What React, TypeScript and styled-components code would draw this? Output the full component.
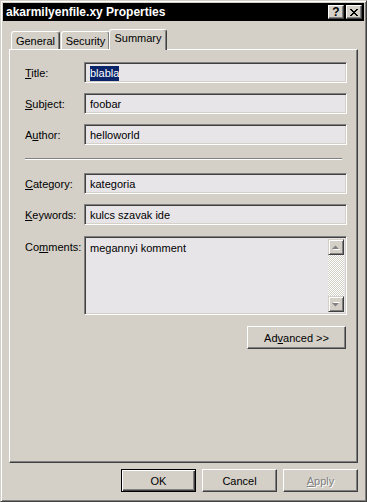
import styled, { createGlobalStyle } from "styled-components";

const GlobalStyle = createGlobalStyle`
  html, body {
    margin: 0;
    padding: 0;
    background: #d4d0c8;
  }
  body {
    font-family: "Liberation Sans", Arial, sans-serif;
    font-size: 11px;
    color: #000;
  }
`;

const Window = styled.div`
  width: 367px;
  height: 502px;
  box-sizing: border-box;
  background: #d4d0c8;
  border: 1px solid;
  border-color: #d4d0c8 #404040 #404040 #d4d0c8;
  box-shadow: inset 1px 1px #fff, inset -1px -1px #808080;
  padding: 2px;
  display: flex;
  flex-direction: column;
`;

const TitleBar = styled.div`
  height: 18px;
  background: #000;
  color: #fff;
  display: flex;
  align-items: center;
  padding: 0 2px;
  gap: 2px;
`;

const Caption = styled.div`
  flex: 1;
  font-weight: bold;
  font-size: 12px;
  padding-left: 1px;
`;

const CaptionButton = styled.div`
  width: 16px;
  height: 14px;
  box-sizing: border-box;
  background: #d4d0c8;
  color: #000;
  border: 1px solid;
  border-color: #fff #404040 #404040 #fff;
  box-shadow: inset -1px -1px #808080;
  display: flex;
  align-items: center;
  justify-content: center;
  font-weight: bold;
  font-size: 12px;
  line-height: 1;
`;

const Body = styled.div`
  padding: 8px 6px 0;
  display: flex;
  flex-direction: column;
`;

const TabStrip = styled.div`
  display: flex;
  align-items: flex-end;
  height: 20px;
  padding-left: 2px;
  gap: 1px;
`;

const Tab = styled.div<{ $w: number; $active?: boolean }>`
  position: relative;
  z-index: ${(p) => (p.$active ? 2 : 0)};
  width: ${(p) => p.$w}px;
  height: ${(p) => (p.$active ? 21 : 18)}px;
  margin-left: ${(p) => (p.$active ? -2 : 0)}px;
  margin-bottom: ${(p) => (p.$active ? -1 : 0)}px;
  box-sizing: border-box;
  background: #d4d0c8;
  border-top: 1px solid #fff;
  border-left: 1px solid #fff;
  border-right: 1px solid #404040;
  border-radius: 3px 3px 0 0;
  box-shadow: inset -1px 0 #808080;
  text-align: center;
  padding-top: ${(p) => (p.$active ? 2 : 3)}px;
`;

const Panel = styled.div`
  position: relative;
  z-index: 1;
  height: 414px;
  box-sizing: border-box;
  border: 1px solid;
  border-color: #fff #404040 #404040 #fff;
  box-shadow: inset -1px -1px #808080;
  padding: 12px 10px 0 15px;
  display: flex;
  flex-direction: column;
`;

const Field = styled.div<{ $gap?: number; $top?: boolean }>`
  display: grid;
  grid-template-columns: 59px 1fr;
  align-items: ${(p) => (p.$top ? "start" : "center")};
  margin-bottom: ${(p) => p.$gap ?? 10}px;
`;

const Label = styled.div<{ $top?: boolean }>`
  padding-top: ${(p) => (p.$top ? 5 : 1)}px;
`;

const TextBox = styled.div<{ $h?: number }>`
  height: ${(p) => p.$h ?? 21}px;
  box-sizing: border-box;
  background: #e8e5e8;
  border: 1px solid;
  border-color: #808080 #fff #fff #808080;
  box-shadow: inset 1px 1px #404040, inset -1px -1px #d4d0c8;
  display: flex;
  align-items: center;
  padding: 1px 0 0 5px;
`;

const MemoBox = styled(TextBox)`
  align-items: stretch;
  padding: 2px 2px 2px 5px;
`;

const MemoText = styled.div`
  flex: 1;
  padding-top: 3px;
`;

const Selected = styled.span`
  background: #0a246a;
  color: #fff;
  padding: 1px 0 2px;
`;

const Separator = styled.div`
  width: 317px;
  height: 1px;
  background: #808080;
  border-bottom: 1px solid #fff;
  margin-bottom: 13px;
`;

const ScrollBar = styled.div`
  width: 16px;
  display: flex;
  flex-direction: column;
`;

const ScrollTrack = styled.div`
  flex: 1;
  background: repeating-conic-gradient(#fff 0 25%, #d4d0c8 0 50%) 0 0 / 2px 2px;
`;

const ArrowButton = styled.div`
  width: 16px;
  height: 16px;
  box-sizing: border-box;
  background: #d4d0c8;
  border: 1px solid;
  border-color: #d4d0c8 #404040 #404040 #d4d0c8;
  box-shadow: inset 1px 1px #fff, inset -1px -1px #808080;
  display: flex;
  align-items: center;
  justify-content: center;
`;

const Button = styled.div<{ $w?: number; $default?: boolean; $disabled?: boolean }>`
  width: ${(p) => p.$w ?? 75}px;
  height: 23px;
  box-sizing: border-box;
  background: #d4d0c8;
  border: 1px solid;
  border-color: ${(p) => (p.$default ? "#000" : "#fff #404040 #404040 #fff")};
  box-shadow: ${(p) =>
    p.$default
      ? "inset 1px 1px #fff, inset -1px -1px #404040, inset -2px -2px #808080"
      : "inset -1px -1px #808080"};
  display: flex;
  align-items: center;
  justify-content: center;
  color: ${(p) => (p.$disabled ? "#808080" : "#000")};
  text-shadow: ${(p) => (p.$disabled ? "1px 1px #fff" : "none")};
`;

const AdvancedRow = styled.div`
  display: flex;
  justify-content: flex-end;
  padding-right: 1px;
`;

const ButtonRow = styled.div`
  display: flex;
  justify-content: flex-end;
  gap: 6px;
  margin-top: 6px;
`;

const Arrow = ({ down }: { down?: boolean }) => (
  <svg width="8" height="5" viewBox="0 0 8 5">
    <g transform={down ? "translate(0 5) scale(1 -1)" : undefined}>
      <polygon points="1,5 8,5 4.5,1.5" fill="#fff" />
      <polygon points="0,4 7,4 3.5,0.5" fill="#808080" />
    </g>
  </svg>
);

const CloseGlyph = () => (
  <svg width="8" height="7" viewBox="0 0 8 7" shapeRendering="crispEdges">
    <path
      d="M0 0h2v1h-2zM6 0h2v1h-2zM1 1h2v1h-2zM5 1h2v1h-2zM2 2h4v1h-4zM3 3h2v1h-2zM2 4h4v1h-4zM1 5h2v1h-2zM5 5h2v1h-2zM0 6h2v1h-2zM6 6h2v1h-2z"
      fill="#000"
    />
  </svg>
);

const fields = [
  { label: "Title:", key: "T", rest: "itle:", value: "blabla", selected: true },
  { label: "Subject:", key: "S", rest: "ubject:", value: "foobar" },
];

export default function App() {
  return (
    <>
      <GlobalStyle />
      <Window>
        <TitleBar>
          <Caption>akarmilyenfile.xy Properties</Caption>
          <CaptionButton>?</CaptionButton>
          <CaptionButton>
            <CloseGlyph />
          </CaptionButton>
        </TitleBar>
        <Body>
          <TabStrip>
            <Tab $w={49}>General</Tab>
            <Tab $w={49}>Security</Tab>
            <Tab $w={58} $active>
              Summary
            </Tab>
          </TabStrip>
          <Panel>
            {fields.map((f) => (
              <Field key={f.label}>
                <Label>
                  <u>{f.key}</u>
                  {f.rest}
                </Label>
                <TextBox>{f.selected ? <Selected>{f.value}</Selected> : f.value}</TextBox>
              </Field>
            ))}
            <Field $gap={13}>
              <Label>
                A<u>u</u>thor:
              </Label>
              <TextBox>helloworld</TextBox>
            </Field>
            <Separator />
            <Field>
              <Label>
                <u>C</u>ategory:
              </Label>
              <TextBox>kategoria</TextBox>
            </Field>
            <Field $gap={11}>
              <Label>
                <u>K</u>eywords:
              </Label>
              <TextBox>kulcs szavak ide</TextBox>
            </Field>
            <Field $gap={11} $top>
              <Label $top>
                Co<u>m</u>ments:
              </Label>
              <MemoBox $h={79}>
                <MemoText>megannyi komment</MemoText>
                <ScrollBar>
                  <ArrowButton>
                    <Arrow />
                  </ArrowButton>
                  <ScrollTrack />
                  <ArrowButton>
                    <Arrow down />
                  </ArrowButton>
                </ScrollBar>
              </MemoBox>
            </Field>
            <AdvancedRow>
              <Button $w={99}>
                Ad<u>v</u>anced &gt;&gt;
              </Button>
            </AdvancedRow>
          </Panel>
          <ButtonRow>
            <Button $default>OK</Button>
            <Button>Cancel</Button>
            <Button $disabled>
              <u>A</u>pply
            </Button>
          </ButtonRow>
        </Body>
      </Window>
    </>
  );
}
